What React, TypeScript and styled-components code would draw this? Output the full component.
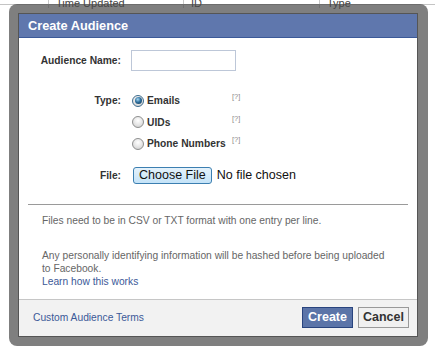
import styled, { createGlobalStyle } from "styled-components";

const GlobalStyle = createGlobalStyle`
    html, body {
        margin: 0;
        padding: 0;
        background: #FFFFFF;
        overflow: hidden;
    }
    * {
        box-sizing: border-box;
    }
`

const columns = [
    { title: "", width: 48 },
    { title: "Time Updated", width: 135 },
    { title: "ID", width: 136 },
    { title: "Type", width: 116 },
]

const options = [
    { id: "emails", text: "Emails", checked: true },
    { id: "uids", text: "UIDs", checked: false },
    { id: "phones", text: "Phone Numbers", checked: false },
]

function App() {
    return (
        <>
            <GlobalStyle />
            <Page>
                <TableHead>
                    {columns.map((c, i) => (
                        <HeadCell key={i} $width={c.width} $first={i === 0}>
                            <HeadText>{c.title}</HeadText>
                        </HeadCell>
                    ))}
                </TableHead>

                <Overlay>
                    <Dialog>
                        <DialogTitle>Create Audience</DialogTitle>
                        <DialogBody>
                            <FormGrid>
                                <FieldLabel $top={0}>Audience Name:</FieldLabel>
                                <NameInput type="text" />

                                <FieldLabel $top={19}>Type:</FieldLabel>
                                <OptionList>
                                    {options.map(o => (
                                        <Option key={o.id}>
                                            <Radio type="radio" name="type" defaultChecked={o.checked} />
                                            <OptionText>{o.text}</OptionText>
                                            <Help>[?]</Help>
                                        </Option>
                                    ))}
                                </OptionList>

                                <FieldLabel $top={10}>File:</FieldLabel>
                                <FileField>
                                    <ChooseButton type="button">Choose File</ChooseButton>
                                    <FileName>No file chosen</FileName>
                                </FileField>
                            </FormGrid>

                            <Divider />

                            <Note>Files need to be in CSV or TXT format with one entry per line.</Note>
                            <Note $spaced>
                                Any personally identifying information will be hashed before being uploaded
                                to Facebook.
                                <br />
                                <NoteLink>Learn how this works</NoteLink>
                            </Note>
                        </DialogBody>
                        <DialogFooter>
                            <FooterLink>Custom Audience Terms</FooterLink>
                            <ButtonGroup>
                                <DialogButton $primary>Create</DialogButton>
                                <DialogButton>Cancel</DialogButton>
                            </ButtonGroup>
                        </DialogFooter>
                    </Dialog>
                </Overlay>
            </Page>
        </>
    )
}

const Page = styled.div`
    position: relative;
    width: 435px;
    height: 356px;
    background: #FFFFFF;
    font-family: "Liberation Sans", Arial, sans-serif;
    overflow: hidden;
`

// table header of the page behind the dialog, mostly scrolled out of view
const TableHead = styled.div`
    display: flex;
    height: 5px;
    border-bottom: 1px solid #C4C4C4;
`

const HeadCell = styled.div<{ $width: number; $first?: boolean }>`
    width: ${p => p.$width}px;
    height: 8px;
    padding-left: 7px;
    border-left: ${p => (p.$first ? "none" : "1px solid #C9C9C9")};
`

const HeadText = styled.span`
    display: block;
    margin-top: -2px;
    font-size: 11px;
    line-height: 11px;
    color: #444;
    white-space: nowrap;
`

const Overlay = styled.div`
    position: absolute;
    left: 9px;
    top: 4px;
    width: 419px;
    padding: 9px 10px 9px 9px;
    background: rgba(72, 72, 72, 0.7);
    border-radius: 8px;
`

const Dialog = styled.div`
    background: #FFFFFF;
    border: 1px solid #555555;
    display: flex;
    flex-direction: column;
`

const DialogTitle = styled.h2`
    margin: 0;
    height: 24px;
    padding: 0 9px;
    background: #5F77AD;
    border-bottom: 1px solid #3B5998;
    color: #FFFFFF;
    font-size: 12.75px;
    font-weight: 700;
    line-height: 23px;
`

const DialogBody = styled.div`
    padding: 12px 0 11px 0;
`

const FormGrid = styled.div`
    display: grid;
    grid-template-columns: 102px auto;
    column-gap: 10px;
    align-items: start;
`

const FieldLabel = styled.label<{ $top: number }>`
    margin-top: ${p => p.$top}px;
    text-align: right;
    font-size: 10.25px;
    font-weight: 700;
    color: #333333;
    line-height: 21px;
`

const NameInput = styled.input`
    width: 105px;
    height: 21px;
    border: 1px solid #BDC7D8;
    padding: 2px 3px;
    font-size: 11px;
    outline: none;
`

const OptionList = styled.div`
    margin-top: 19px;
    display: flex;
    flex-direction: column;
`

const Option = styled.label`
    display: flex;
    align-items: center;
    height: 21.5px;
    padding-left: 1px;
`

const Radio = styled.input`
    appearance: none;
    margin: 0 3px 0 0;
    width: 12px;
    height: 12px;
    border-radius: 50%;
    border: 1px solid #8E8F8F;
    background: radial-gradient(circle at 50% 35%, #FFFFFF 0%, #E4E4E4 55%, #C9C9C9 100%);
    position: relative;

    &:checked {
        border-color: #3D6C8E;
    }

    &:checked::after {
        content: "";
        position: absolute;
        left: 1.5px;
        top: 1.5px;
        width: 7px;
        height: 7px;
        border-radius: 50%;
        background: radial-gradient(circle at 40% 35%, #A6DAF7 0%, #2F6F9C 45%, #0D3553 100%);
    }
`

const OptionText = styled.span`
    min-width: 80px;
    font-size: 10.25px;
    font-weight: 700;
    color: #333333;
`

const Help = styled.span`
    font-size: 7.5px;
    color: #8A8A8A;
    margin-left: 5px;
    align-self: flex-start;
    margin-top: 2px;
`

const FileField = styled.div`
    margin-top: 10px;
    display: flex;
    align-items: center;
    height: 21px;
    padding-left: 2px;
`

const ChooseButton = styled.button`
    height: 17px;
    padding: 0 5px;
    border: 1px solid #3C7FB1;
    border-radius: 3px;
    background: linear-gradient(#E5F2FB, #C4E3F8);
    font-family: "Liberation Sans", Arial, sans-serif;
    font-size: 12.5px;
    color: #111;
    line-height: 15px;
`

const FileName = styled.span`
    margin-left: 5px;
    font-size: 12.5px;
    color: #111;
`

const Divider = styled.hr`
    margin: 18px 9px 0 9px;
    border: 0;
    border-top: 1px solid #9A9A9A;
`

const Note = styled.p<{ $spaced?: boolean }>`
    margin: ${p => (p.$spaced ? "22px" : "9px")} 23px 0 23px;
    font-size: 10.25px;
    line-height: 13px;
    color: #666666;
`

const NoteLink = styled.a`
    color: #3B5998;
    cursor: pointer;
`

const DialogFooter = styled.div`
    display: flex;
    align-items: center;
    justify-content: space-between;
    height: 37px;
    padding: 0 8px 0 14px;
    background: #F2F2F2;
    border-top: 1px solid #C6C6C6;
`

const FooterLink = styled.a`
    font-size: 10.25px;
    color: #3B5998;
    cursor: pointer;
`

const ButtonGroup = styled.div`
    display: flex;
    gap: 5px;
`

const DialogButton = styled.button<{ $primary?: boolean }>`
    height: 21px;
    padding: 0 ${p => (p.$primary ? 5 : 4)}px;
    font-family: "Liberation Sans", Arial, sans-serif;
    font-size: 12.5px;
    font-weight: 700;
    line-height: 19px;
    color: ${p => (p.$primary ? "#FFFFFF" : "#333333")};
    background: ${p => (p.$primary ? "#5B74A8" : "#F0F0F0")};
    border: 1px solid ${p => (p.$primary ? "#29447E" : "#999999")};
    border-radius: 0;
    cursor: pointer;
`

export default App;
